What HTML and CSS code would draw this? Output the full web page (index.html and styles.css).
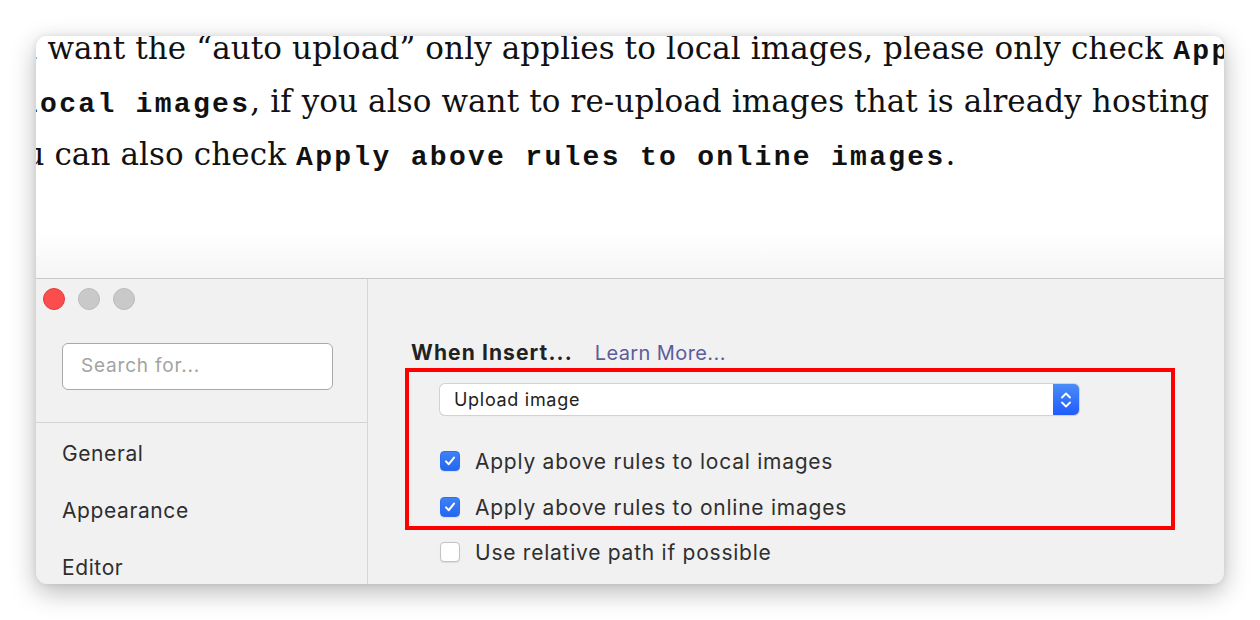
FILE: index.html
```html
<!DOCTYPE html>
<html>
<head>
<meta charset="utf-8">
<link rel="stylesheet" href="styles.css">
</head>
<body>
<div class="card">
  <div class="doc">
    <div class="doc-text">
      <div class="line line1">you want the “auto upload” only applies to local images, please only check <code>Apply above rules to local images</code></div>
      <div class="line line2"><code>local images</code>, if you also want to re-upload images that is already hosting</div>
      <div class="line line3">you can also check <code>Apply above rules to online images</code>.</div>
    </div>
  </div>
  <div class="window">
    <aside class="sidebar">
      <div class="lights">
        <span class="light red"></span>
        <span class="light gray"></span>
        <span class="light gray"></span>
      </div>
      <div class="search-wrap">
        <div class="search">Search for...</div>
      </div>
      <nav class="nav">
        <div class="nav-item">General</div>
        <div class="nav-item">Appearance</div>
        <div class="nav-item">Editor</div>
      </nav>
    </aside>
    <main class="panel">
      <div class="heading">
        <span class="title">When Insert...</span>
        <span class="link">Learn More...</span>
      </div>
      <div class="highlight">
        <div class="select">
          <span class="select-text">Upload image</span>
          <span class="stepper">
            <svg width="12" height="20" viewBox="0 0 12 20"><path d="M2 7.5 L6 3.5 L10 7.5" fill="none" stroke="#fff" stroke-width="1.8" stroke-linecap="round" stroke-linejoin="round"/><path d="M2 12.5 L6 16.5 L10 12.5" fill="none" stroke="#fff" stroke-width="1.8" stroke-linecap="round" stroke-linejoin="round"/></svg>
          </span>
        </div>
        <div class="checks">
          <label class="check-row"><span class="box checked"><svg width="14" height="14" viewBox="0 0 14 14"><path d="M3 7.4 L5.8 10.2 L11 3.6" fill="none" stroke="#fff" stroke-width="2" stroke-linecap="round" stroke-linejoin="round"/></svg></span><span class="label">Apply above rules to local images</span></label>
          <label class="check-row"><span class="box checked"><svg width="14" height="14" viewBox="0 0 14 14"><path d="M3 7.4 L5.8 10.2 L11 3.6" fill="none" stroke="#fff" stroke-width="2" stroke-linecap="round" stroke-linejoin="round"/></svg></span><span class="label">Apply above rules to online images</span></label>
        </div>
      </div>
      <label class="check-row outside"><span class="box"></span><span class="label">Use relative path if possible</span></label>
    </main>
  </div>
</div>
</body>
</html>
```
FILE: styles.css
```css
html, body {
  margin: 0;
  padding: 0;
  background: #ffffff;
}
body {
  width: 1260px;
  height: 620px;
  overflow: hidden;
}
.card {
  margin: 36px 0 0 36px;
  width: 1188px;
  height: 548px;
  border-radius: 11px;
  overflow: hidden;
  background: #f1f1f1;
  box-shadow: 0 8px 26px rgba(0, 0, 0, 0.28), 0 0 6px rgba(0, 0, 0, 0.08);
  display: flex;
  flex-direction: column;
}
.doc {
  height: 242px;
  flex: none;
  overflow: hidden;
  background: linear-gradient(to bottom, #ffffff 0px, #ffffff 195px, #f5f5f5 242px);
  border-bottom: 1px solid #c8c8c8;
}
.doc-text {
  margin-top: -14px;
  font-family: "DejaVu Serif", serif;
  font-size: 31px;
  letter-spacing: 0.1px;
  color: #111;
}
.line {
  white-space: nowrap;
  height: 53px;
  line-height: 53px;
}
.line1 { margin-left: -55px; }
.line2 { margin-left: -15px; }
.line3 { margin-left: -48px; }
code {
  font-family: "Liberation Mono", monospace;
  font-weight: bold;
  font-size: 28px;
  letter-spacing: 2.3px;
  line-height: 1;
}
.window {
  flex: 1;
  display: flex;
  font-family: "Inter", "Noto Sans", sans-serif;
  color: #2f2f2f;
}
.sidebar {
  width: 331px;
  flex: none;
  border-right: 1px solid #d6d6d6;
}
.lights {
  display: flex;
  gap: 13px;
  padding: 9px 0 0 7px;
}
.light {
  width: 22px;
  height: 22px;
  border-radius: 50%;
  box-sizing: border-box;
}
.light.red {
  background: #fc4d4d;
  border: 1px solid #e5393c;
}
.light.gray {
  background: #c9c9c9;
  border: 1px solid #bbbbbb;
}
.search-wrap {
  padding: 33px 0 32px 26px;
  border-bottom: 1px solid #d3d3d3;
}
.search {
  width: 271px;
  height: 47px;
  box-sizing: border-box;
  border: 1.5px solid #a9a9a9;
  border-radius: 6px;
  background: #ffffff;
  font-size: 19px;
  letter-spacing: 0.8px;
  color: #a3a3a3;
  line-height: 44px;
  padding-left: 18px;
}
.nav {
  padding-top: 2px;
}
.nav-item {
  height: 57px;
  line-height: 57px;
  padding-left: 26px;
  font-size: 21px;
  letter-spacing: 0.6px;
  color: #2e2e2e;
}
.panel {
  flex: 1;
  padding: 62px 0 0 37px;
}
.heading {
  height: 24px;
  line-height: 24px;
  padding-left: 6px;
  display: flex;
  align-items: baseline;
  gap: 22px;
}
.title {
  font-size: 21px;
  font-weight: 700;
  letter-spacing: 1.1px;
  color: #222;
}
.link {
  font-size: 20px;
  color: #5c5c9c;
  letter-spacing: 0.4px;
}
.highlight {
  margin-top: 3px;
  width: 770px;
  box-sizing: border-box;
  border: 4px solid #fe0000;
  padding: 12px 0 7px 31px;
}
.select {
  width: 639px;
  height: 31px;
  box-sizing: border-box;
  display: flex;
  align-items: center;
  background: #ffffff;
  border-radius: 5px;
  box-shadow: 0 0 0 1px #d2d2d2, 0 1px 1px rgba(0,0,0,0.15);
}
.select-text {
  flex: 1;
  padding-left: 14px;
  font-size: 18px;
  letter-spacing: 0.7px;
  color: #222;
}
.stepper {
  width: 26px;
  height: 31px;
  display: flex;
  align-items: center;
  justify-content: center;
  border-radius: 0 5px 5px 0;
  background: linear-gradient(to bottom, #4a8cf7, #1f5cfd);
}
.checks {
  margin-top: 34px;
  display: flex;
  flex-direction: column;
  gap: 22px;
}
.check-row {
  display: flex;
  align-items: center;
  gap: 15px;
  height: 24px;
}
.box {
  width: 20px;
  height: 20px;
  flex: none;
  box-sizing: border-box;
  border-radius: 4px;
  background: #ffffff;
  border: 1px solid #c2c2c2;
  display: flex;
  align-items: center;
  justify-content: center;
  box-shadow: 0 1px 1px rgba(0,0,0,0.08);
}
.box.checked {
  background: linear-gradient(to bottom, #3d82f7, #2466ee);
  border: 1px solid #2e6ef0;
}
.label {
  font-size: 21px;
  letter-spacing: 0.75px;
  color: #2f2f2f;
}
.outside {
  margin: 10px 0 0 35px;
}
```
